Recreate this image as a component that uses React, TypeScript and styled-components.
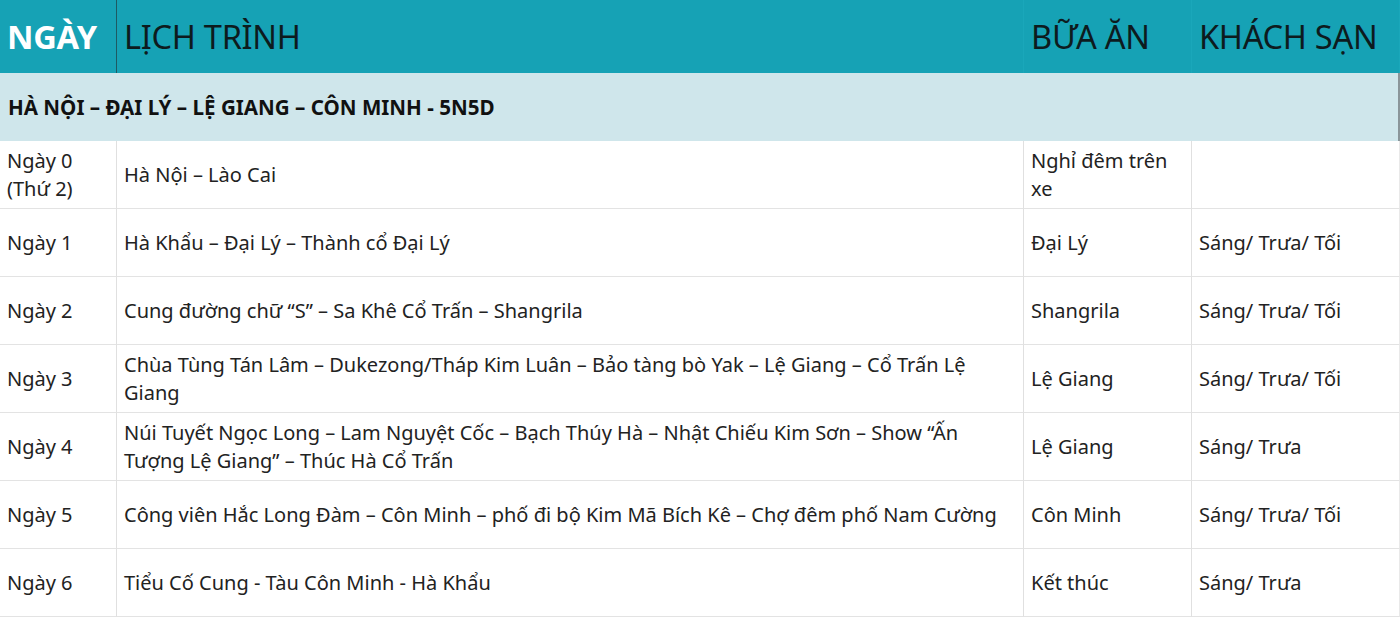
import styled, { createGlobalStyle } from "styled-components";

const GlobalStyle = createGlobalStyle`
  body {
    margin: 0;
    background: #ffffff;
    font-family: "Noto Sans", "Open Sans", sans-serif;
    color: #1f1f1f;
  }
`;

const Table = styled.div`
  display: grid;
  grid-template-columns: 117px 907px 168px 208px;
  width: 1400px;
`;

const HeadCell = styled.div<{ $bold?: boolean; $divider?: boolean }>`
  height: 73px;
  display: flex;
  align-items: center;
  padding: 0 7px;
  box-sizing: border-box;
  background: #16a2b5;
  color: ${(p) => (p.$bold ? "#ffffff" : "#0d1b1e")};
  font-weight: ${(p) => (p.$bold ? 700 : 400)};
  font-size: 32.6px;
  letter-spacing: -0.3px;
  border-right: 1px solid ${(p) => (p.$divider ? "#1d5a63" : "#1aa7ba")};
`;

const Group = styled.div`
  grid-column: 1 / -1;
  height: 68px;
  display: flex;
  align-items: center;
  padding: 0 8px;
  box-sizing: border-box;
  background: #cfe6eb;
  border-right: 2px solid #8a9599;
  font-weight: 700;
  font-size: 20.6px;
  color: #111;
`;

const Cell = styled.div<{ $last?: boolean }>`
  height: 68px;
  display: flex;
  align-items: center;
  padding: 0 7px;
  box-sizing: border-box;
  font-size: 20px;
  line-height: 28px;
  color: #222;
  border-bottom: 1px solid #e3e3e3;
  border-right: 1px solid ${(p) => (p.$last ? "#e9e9e9" : "#e0e0e0")};
`;

const Text = styled.span`
  white-space: pre-line;
`;

const rows = [
  {
    day: "Ngày 0\n(Thứ 2)",
    plan: "Hà Nội – Lào Cai",
    meal: "Nghỉ đêm trên\nxe",
    hotel: "",
  },
  {
    day: "Ngày 1",
    plan: "Hà Khẩu – Đại Lý – Thành cổ Đại Lý",
    meal: "Đại Lý",
    hotel: "Sáng/ Trưa/ Tối",
  },
  {
    day: "Ngày 2",
    plan: "Cung đường chữ “S” – Sa Khê Cổ Trấn – Shangrila",
    meal: "Shangrila",
    hotel: "Sáng/ Trưa/ Tối",
  },
  {
    day: "Ngày 3",
    plan: "Chùa Tùng Tán Lâm – Dukezong/Tháp Kim Luân – Bảo tàng bò Yak – Lệ Giang – Cổ Trấn Lệ\nGiang",
    meal: "Lệ Giang",
    hotel: "Sáng/ Trưa/ Tối",
  },
  {
    day: "Ngày 4",
    plan: "Núi Tuyết Ngọc Long – Lam Nguyệt Cốc – Bạch Thúy Hà – Nhật Chiếu Kim Sơn – Show “Ấn\nTượng Lệ Giang” – Thúc Hà Cổ Trấn",
    meal: "Lệ Giang",
    hotel: "Sáng/ Trưa",
  },
  {
    day: "Ngày 5",
    plan: "Công viên Hắc Long Đàm – Côn Minh – phố đi bộ Kim Mã Bích Kê – Chợ đêm phố Nam Cường",
    meal: "Côn Minh",
    hotel: "Sáng/ Trưa/ Tối",
  },
  {
    day: "Ngày 6",
    plan: "Tiểu Cố Cung - Tàu Côn Minh - Hà Khẩu",
    meal: "Kết thúc",
    hotel: "Sáng/ Trưa",
  },
];

export default function App() {
  return (
    <>
      <GlobalStyle />
      <Table>
        <HeadCell $bold $divider>
          NGÀY
        </HeadCell>
        <HeadCell>LỊCH TRÌNH</HeadCell>
        <HeadCell>BỮA ĂN</HeadCell>
        <HeadCell>KHÁCH SẠN</HeadCell>
        <Group>HÀ NỘI – ĐẠI LÝ – LỆ GIANG – CÔN MINH - 5N5D</Group>
        {rows.map((r) => [
          <Cell key={r.day + "d"}>
            <Text>{r.day}</Text>
          </Cell>,
          <Cell key={r.day + "p"}>
            <Text>{r.plan}</Text>
          </Cell>,
          <Cell key={r.day + "m"}>
            <Text>{r.meal}</Text>
          </Cell>,
          <Cell key={r.day + "h"} $last>
            <Text>{r.hotel}</Text>
          </Cell>,
        ])}
      </Table>
    </>
  );
}
